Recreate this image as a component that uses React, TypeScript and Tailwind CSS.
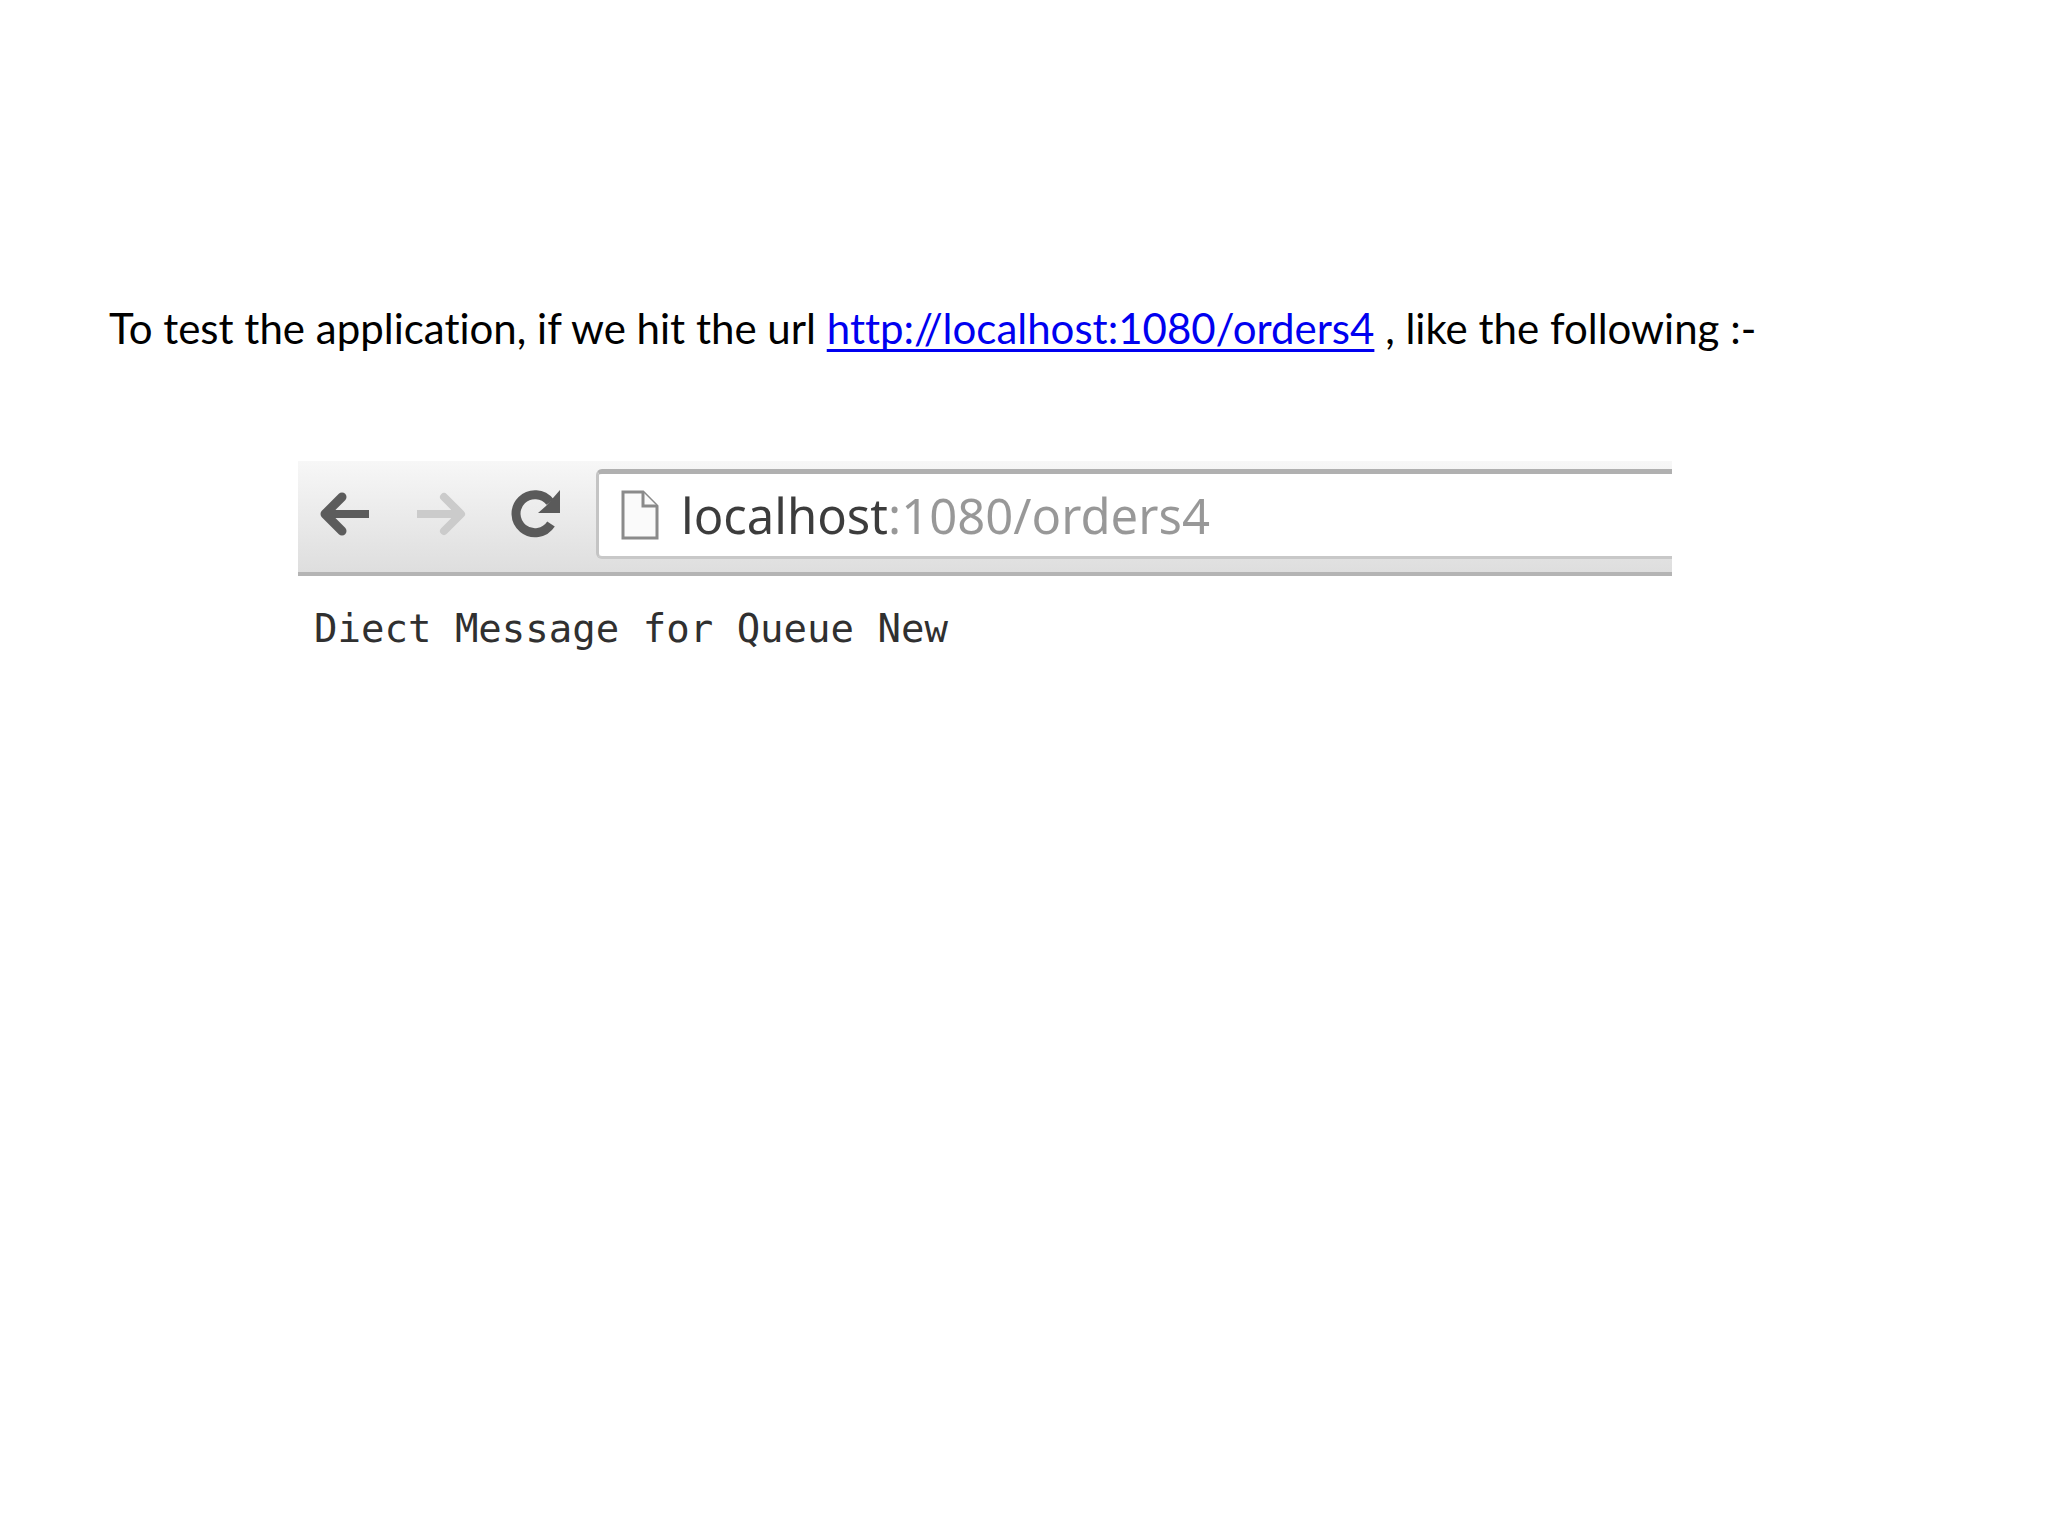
import React from 'react';

function BackIcon() {
  return (
    <svg viewBox="0 0 52 44" className="h-11 w-13" fill="none" stroke="#5c5c5c" strokeWidth="8" strokeLinejoin="round" aria-hidden="true">
      <path d="M10 22H50" />
      <path d="M23 5 6 22l17 17" strokeWidth="9" strokeLinecap="round" />
      <path d="M8 22l8-8v16z" fill="#5c5c5c" stroke="none" />
    </svg>
  );
}

function ForwardIcon() {
  return (
    <svg viewBox="0 0 52 44" className="h-11 w-13" fill="none" stroke="#cbcbcb" strokeWidth="8" strokeLinejoin="round" aria-hidden="true">
      <path d="M2 22h40" />
      <path d="m29 5 17 17-17 17" strokeLinecap="round" />
      <path d="M44 22l-8-8v16z" fill="#cbcbcb" stroke="none" />
    </svg>
  );
}

function ReloadIcon() {
  return (
    <svg viewBox="0 0 52 50" className="h-[50px] w-13" aria-hidden="true">
      <path d="M39 13A19 19 0 1 0 40 35" fill="none" stroke="#5a5a5a" strokeWidth="9" />
      <path d="M49 1v23H27l8-7z" fill="#5a5a5a" />
    </svg>
  );
}

function PageIcon() {
  return (
    <svg viewBox="0 0 38 50" className="h-[50px] w-[38px] shrink-0" fill="#fafafa" stroke="#8a8a8a" strokeWidth="3" aria-hidden="true">
      <path d="M2 2h20l14 14v32H2z" />
      <path d="M22 2v14h14" />
    </svg>
  );
}

function Toolbar() {
  return (
    <div className="flex h-[115px] border-b-4 border-[#b4b4b4] bg-linear-to-b from-[#f7f7f7] to-[#dedede] pt-2">
      <div className="flex h-[90px] w-[298px] shrink-0 items-center gap-11 pl-[21px]">
        <button type="button" aria-label="Back">
          <BackIcon />
        </button>
        <button type="button" aria-label="Forward">
          <ForwardIcon />
        </button>
        <button type="button" aria-label="Reload">
          <ReloadIcon />
        </button>
      </div>
      <div className="flex h-[90px] grow items-center gap-[22px] rounded-l-md border-t-5 border-b-3 border-l-3 border-t-[#b0b0b0] border-b-[#c8c8c8] border-l-[#c4c4c4] bg-white pl-[22px]">
        <PageIcon />
        <input
          type="text"
          aria-label="Address"
          defaultValue="localhost:1080/orders4"
          className="h-20 min-w-0 grow bg-[linear-gradient(to_right,#3c3c3c_206px,#989898_206px)] bg-clip-text font-['Noto_Sans',sans-serif] text-[49px] text-transparent outline-none"
        />
      </div>
    </div>
  );
}

export default function App() {
  return (
    <main className="min-h-screen bg-white pt-[296px]">
      <p className="pl-[109px] font-['Lato',sans-serif] text-[42px] leading-[64px] text-black [font-variant-ligatures:none]">
        To test the application, if we hit the url{' '}
        <a
          href="http://localhost:1080/orders4"
          className="text-[#0000f0] underline decoration-3 underline-offset-5 [text-decoration-skip-ink:none]"
        >
          http://localhost:1080/orders4
        </a>{' '}
        , like the following :-
      </p>
      <section className="mt-[101px] mr-[376px] ml-[298px]">
        <Toolbar />
        <pre className="pt-6 pl-4 font-['DejaVu_Sans_Mono',monospace] text-[39px] leading-[58px] text-[#303030]">
          Diect Message for Queue New
        </pre>
      </section>
    </main>
  );
}
